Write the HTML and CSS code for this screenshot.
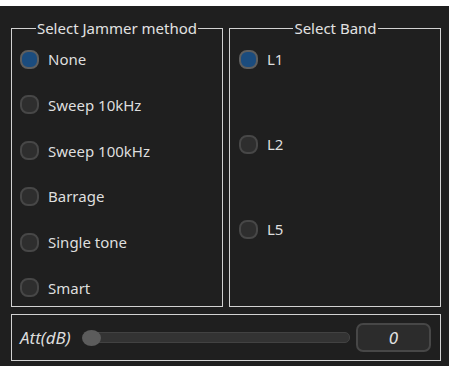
FILE: index.html
```html
<!DOCTYPE html>
<html>
<head>
<meta charset="utf-8">
<link rel="stylesheet" href="styles.css">
</head>
<body>
<div class="app">
  <div class="top">
    <fieldset class="group jam">
      <legend>Select Jammer method</legend>
      <div class="list">
        <label class="radio checked"><span class="dot"></span>None</label>
        <label class="radio"><span class="dot"></span>Sweep 10kHz</label>
        <label class="radio"><span class="dot"></span>Sweep 100kHz</label>
        <label class="radio"><span class="dot"></span>Barrage</label>
        <label class="radio"><span class="dot"></span>Single tone</label>
        <label class="radio"><span class="dot"></span>Smart</label>
      </div>
    </fieldset>
    <fieldset class="group band">
      <legend>Select Band</legend>
      <div class="list">
        <label class="radio checked"><span class="dot"></span>L1</label>
        <label class="radio"><span class="dot"></span>L2</label>
        <label class="radio"><span class="dot"></span>L5</label>
      </div>
    </fieldset>
  </div>
  <div class="att">
    <span class="att-label">Att(dB)</span>
    <div class="slider"><span class="track"></span><span class="handle"></span></div>
    <div class="value">0</div>
  </div>
</div>
</body>
</html>
```
FILE: styles.css
```css
html, body {
  margin: 0;
  padding: 0;
  background: #ffffff;
}
body {
  font-family: "Noto Sans", "Open Sans", sans-serif;
  font-size: 15px;
  color: #dedede;
}
.app {
  margin-top: 6px;
  height: 360px;
  background: #1f1f1f;
  box-sizing: border-box;
  padding: 13px 8px 0 11px;
  display: flex;
  flex-direction: column;
}
.top {
  display: flex;
  gap: 6px;
  height: 288px;
}
.group {
  margin: 0;
  border: 1px solid #d2d2d2;
  padding: 11px 8px 0 8px;
  min-width: 0;
  box-sizing: border-box;
  width: 212px;
  height: 288px;
}
.group legend {
  margin: 0 auto;
  padding: 0 1px;
  line-height: 18px;
  font-size: 15px;
  color: #e2e2e2;
}
.list {
  display: flex;
  flex-direction: column;
}
.jam .list { gap: 23.8px; }
.band .list { gap: 63px; }
.band { padding-left: 9px; }
.radio {
  display: flex;
  align-items: center;
  height: 22px;
  gap: 9px;
  line-height: 22px;
}
.dot {
  width: 19px;
  height: 19px;
  box-sizing: border-box;
  border: 2px solid #474747;
  border-radius: 8px;
  background: #2e2e2e;
  flex: none;
}
.checked .dot {
  background: #1b4c7e;
  border-color: #5e5e5e;
}
.att {
  margin-top: 7px;
  height: 47px;
  box-sizing: border-box;
  border: 1px solid #d2d2d2;
  display: flex;
  align-items: center;
  padding: 0 9px 0 8px;
}
.att-label {
  font-style: italic;
  font-size: 17px;
  color: #dcdcdc;
  width: 62px;
  flex: none;
}
.slider {
  position: relative;
  width: 268px;
  height: 18px;
  display: flex;
  align-items: center;
  flex: none;
}
.track {
  display: block;
  margin-left: 6px;
  flex: 1;
  height: 9px;
  border-radius: 5px;
  background: #333333;
  border: 1px solid #424242;
}
.handle {
  position: absolute;
  left: 0;
  top: 1px;
  width: 19px;
  height: 16px;
  border-radius: 50%;
  background: #5c5c5c;
}
.value {
  margin-left: auto;
  width: 75px;
  height: 29px;
  box-sizing: border-box;
  border: 2px solid #474747;
  border-radius: 7px;
  background: #2c2c2c;
  display: flex;
  align-items: center;
  justify-content: center;
  font-style: italic;
  font-size: 17px;
  color: #e2e2e2;
}
```
